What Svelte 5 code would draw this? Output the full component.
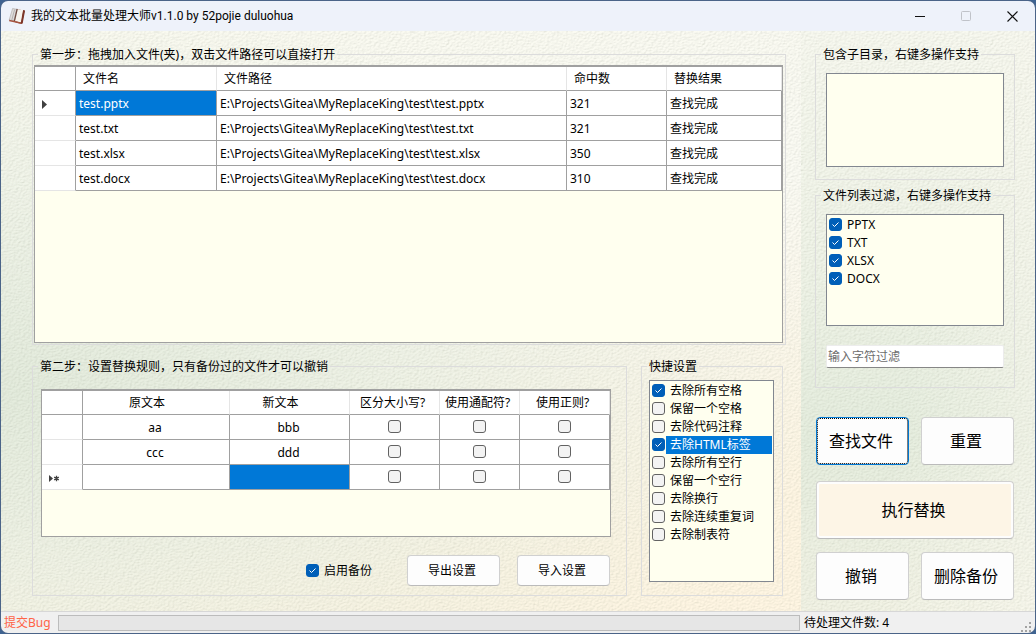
<script>
  const files = [
    { name: 'test.pptx', hits: 321, result: '查找完成' },
    { name: 'test.txt', hits: 321, result: '查找完成' },
    { name: 'test.xlsx', hits: 350, result: '查找完成' },
    { name: 'test.docx', hits: 310, result: '查找完成' }
  ];
  const root = 'E:\\Projects\\Gitea\\MyReplaceKing\\test\\';

  const rules = [
    { from: 'aa', to: 'bbb' },
    { from: 'ccc', to: 'ddd' },
    { from: '', to: '' }
  ];
  const flags = ['区分大小写?', '使用通配符?', '使用正则?'];

  let types = $state([
    { label: 'PPTX', on: true },
    { label: 'TXT', on: true },
    { label: 'XLSX', on: true },
    { label: 'DOCX', on: true }
  ]);

  let quick = $state([
    { label: '去除所有空格', on: true },
    { label: '保留一个空格', on: false },
    { label: '去除代码注释', on: false },
    { label: '去除HTML标签', on: true },
    { label: '去除所有空行', on: false },
    { label: '保留一个空行', on: false },
    { label: '去除换行', on: false },
    { label: '去除连续重复词', on: false },
    { label: '去除制表符', on: false }
  ]);
  let selected = $state(3);
  let backup = $state(true);
  let filter = $state('');
</script>

<div class="window">
  <header class="titlebar">
    <svg class="logo" width="18" height="18" viewBox="0 0 18 18" aria-hidden="true">
      <path d="M10 2 16.500 4 14 17 7.500 15.500z" fill="#8c4434" />
      <path d="M4.600 1.500 1.200 13l4.600.8L8.600 2.300z" fill="#dfdddc" stroke="#aaa6a4" stroke-width=".6" />
      <path d="M9.200 2 6.400 14l6.800 1.500L15.400 3z" fill="#f7f4ee" />
      <path d="M9.200 1.800 6.400 14.200" stroke="#6d4a41" stroke-width="1.300" />
      <path d="M6.600 2.600 3.800 13" stroke="#a9a6a4" stroke-width=".8" />
      <path d="M1.200 13.500 6 14.500l7.500 1.900" fill="none" stroke="#a5533f" stroke-width="1.300" />
      <path d="M16.100 3.200 13.700 16.400" fill="none" stroke="#7c3528" stroke-width="2" />
    </svg>
    <h1>我的文本批量处理大师v1.1.0 by 52pojie duluohua</h1>
    <div class="controls">
      <button aria-label="最小化"><svg width="11" height="11" viewBox="0 0 11 11"><path d="M0 5.500h10" stroke="#111" /></svg></button>
      <button aria-label="最大化" disabled><svg width="11" height="11" viewBox="0 0 11 11"><rect x=".5" y=".5" width="9" height="9" rx="1" fill="none" stroke="#c0c3c9" /></svg></button>
      <button aria-label="关闭"><svg width="11" height="11" viewBox="0 0 11 11"><path d="m.5.5 10 10m0-10-10 10" stroke="#111" stroke-width="1.100" /></svg></button>
    </div>
  </header>

  <div class="content">
    <main>
      <fieldset class="files">
        <legend>第一步：拖拽加入文件(夹)，双击文件路径可以直接打开</legend>
        <div class="grid">
          <table>
            <colgroup><col class="c-head" /><col class="c-name" /><col /><col class="c-hits" /><col class="c-result" /></colgroup>
            <thead>
              <tr><th></th><th>文件名</th><th>文件路径</th><th>命中数</th><th>替换结果</th></tr>
            </thead>
            <tbody>
              {#each files as file, i}
                <tr>
                  <th>
                    {#if i === 0}
                      <svg width="6" height="9" viewBox="0 0 6 9" aria-hidden="true"><path d="M1 0v9l5-4.500z" fill="#404040" /></svg>
                    {/if}
                  </th>
                  <td class:active={i === 0}>{file.name}</td>
                  <td>{root}{file.name}</td>
                  <td>{file.hits}</td>
                  <td>{file.result}</td>
                </tr>
              {/each}
            </tbody>
          </table>
        </div>
      </fieldset>

      <div class="lower">
        <fieldset class="rules">
          <legend>第二步：设置替换规则，只有备份过的文件才可以撤销</legend>
          <div class="grid centered">
            <table>
              <colgroup><col class="c-head" /><col /><col class="c-to" /><col class="c-case" /><col class="c-wild" /><col class="c-regex" /></colgroup>
              <thead>
                <tr><th></th><th>原文本</th><th>新文本</th>{#each flags as flag}<th>{flag}</th>{/each}</tr>
              </thead>
              <tbody>
                {#each rules as rule, i}
                  <tr>
                    <th>
                      {#if i === 2}
                        <svg width="12" height="7" viewBox="0 0 12 7" aria-hidden="true"><path d="M1 0v7l4-3.500z" fill="#404040" /><path d="M8.500.800v5.400M6.200 2.100l4.600 2.800M10.800 2.100 6.200 4.900" stroke="#404040" stroke-width="1.300" /></svg>
                      {/if}
                    </th>
                    <td>{rule.from}</td>
                    <td class:active={i === 2}>{rule.to}</td>
                    {#each flags as flag}
                      <td><input type="checkbox" aria-label={flag} /></td>
                    {/each}
                  </tr>
                {/each}
              </tbody>
            </table>
          </div>
          <div class="actions">
            <label><input type="checkbox" bind:checked={backup} />启用备份</label>
            <button class="btn">导出设置</button>
            <button class="btn">导入设置</button>
          </div>
        </fieldset>

        <fieldset class="quick">
          <legend>快捷设置</legend>
          <div class="listbox">
            {#each quick as item, i}
              <label class:selected={i === selected}>
                <input type="checkbox" bind:checked={item.on} onchange={() => (selected = i)} />
                <span>{item.label}</span>
              </label>
            {/each}
          </div>
        </fieldset>
      </div>
    </main>

    <aside>
      <fieldset class="folders">
        <legend>包含子目录，右键多操作支持</legend>
        <div class="listbox"></div>
      </fieldset>

      <fieldset class="filters">
        <legend>文件列表过滤，右键多操作支持</legend>
        <div class="listbox">
          {#each types as type}
            <label><input type="checkbox" bind:checked={type.on} /><span>{type.label}</span></label>
          {/each}
        </div>
        <input class="search" type="text" placeholder="输入字符过滤" aria-label="输入字符过滤" bind:value={filter} />
      </fieldset>

      <div class="commands">
        <button class="btn focused">查找文件</button>
        <button class="btn">重置</button>
        <button class="btn run">执行替换</button>
        <button class="btn">撤销</button>
        <button class="btn">删除备份</button>
      </div>
    </aside>
  </div>

  <footer>
    <a href="#bug">提交Bug</a>
    <div class="progress" role="progressbar" aria-label="进度" aria-valuenow="0"></div>
    <p>待处理文件数: 4</p>
    <svg width="11" height="11" viewBox="0 0 11 11" fill="#a3a3a3" aria-hidden="true">
      <path d="M8 0h2v2H8zM4 4h2v2H4zM8 4h2v2H8zM0 8h2v2H0zM4 8h2v2H4zM8 8h2v2H8z" />
    </svg>
  </footer>
</div>

<style>
  :global(body) {
    margin: 0;
    background: #3f6391;
  }

  .window {
    --paper: url("data:image/svg+xml,%3Csvg xmlns='http://www.w3.org/2000/svg' width='256' height='256'%3E%3Cfilter id='p' x='0' y='0' width='1' height='1' color-interpolation-filters='sRGB'%3E%3CfeTurbulence type='fractalNoise' baseFrequency='.42 .75' numOctaves='2' seed='7' stitchTiles='stitch'/%3E%3CfeDiffuseLighting surfaceScale='.8' lighting-color='white'%3E%3CfeDistantLight azimuth='235' elevation='55'/%3E%3C/feDiffuseLighting%3E%3CfeColorMatrix values='0 0 0 0 .35 0 0 0 0 .38 0 0 0 0 .3 -.45 0 0 0 .4'/%3E%3C/filter%3E%3Crect width='256' height='256' filter='url(%23p)'/%3E%3C/svg%3E");
    box-sizing: border-box;
    display: flex;
    flex-direction: column;
    min-height: 100vh;
    border: 1px solid #4b6488;
    border-radius: 8px;
    overflow: hidden;
    color: #000;
    font: 12px/16px 'Noto Sans', 'Noto Sans CJK SC', sans-serif;
  }

  .titlebar {
    display: flex;
    align-items: center;
    height: 30px;
    padding-left: 7px;
    background: #eef2fa;
  }

  h1 {
    flex: 1;
    margin: 0 0 0 5px;
    font: 400 12px/16px Roboto, 'Noto Sans CJK SC', sans-serif;
  }

  .controls {
    display: flex;
  }

  .controls button {
    display: grid;
    place-items: center;
    width: 46px;
    height: 30px;
    padding: 0;
    border: 0;
    background: none;
  }

  .content {
    display: flex;
    flex: 1;
  }

  main {
    display: flex;
    flex: 1;
    flex-direction: column;
    gap: 13px;
    min-width: 0;
    padding: 15px 15px 15px 31px;
    background:
      var(--paper),
      radial-gradient(ellipse at 0 62%, #e4ecdd 0, #eaf0e3b0 35%, #ecf1e400 75%),
      linear-gradient(165deg, #fafaf0 0, #fbfbf4 45%, #fff6e3 85%);
  }

  aside {
    display: flex;
    flex-direction: column;
    width: 200px;
    padding: 15px 20px 11px 14px;
    background:
      var(--paper),
      linear-gradient(100deg, #e6eedf00 50%, #faf9efb0 100%),
      linear-gradient(180deg, #f8f9f0 0, #f0f4e8 40%, #e6eedf 70%, #f2f3e5 100%);
  }

  fieldset {
    display: flex;
    flex-direction: column;
    min-width: 0;
    margin: 0;
    padding: 0;
    border: 1px solid #dcdcdc;
  }

  legend {
    margin-left: 5px;
    padding: 1px 2px 0;
    line-height: 16px;
  }

  .files {
    flex: 1;
  }

  .files .grid {
    flex: 1;
    margin: 2px 2px 1px 1px;
  }

  .lower {
    display: flex;
    gap: 14px;
    margin-right: 3px;
  }

  .rules {
    flex: 1;
  }

  .rules .grid {
    min-height: 145px;
    margin: 14px 15px 0 8px;
  }

  .grid {
    border: 1px solid #a0a0a0;
    border-top-width: 2px;
    background: #ffffef;
  }

  table {
    width: 100%;
    border-collapse: separate;
    border-spacing: 0;
    table-layout: fixed;
    background: #fff;
  }

  .c-head { width: 41px; }
  .c-name { width: 141px; }
  .c-hits { width: 100px; }
  .c-result { width: 115px; }
  .c-to { width: 120px; }
  .c-case, .c-regex { width: 90px; }
  .c-wild { width: 80px; }

  th, td {
    box-sizing: border-box;
    height: 25px;
    padding: 2px 3px 0;
    border-right: 1px solid #a0a0a0;
    border-bottom: 1px solid #a0a0a0;
    font-weight: 400;
    line-height: 16px;
    text-align: left;
    white-space: nowrap;
  }

  thead th {
    height: 24px;
    padding: 0 7px;
    border-right-color: #e5e5e5;
  }

  thead th:first-child {
    border-right-color: #a0a0a0;
  }

  tbody th {
    padding: 2px 6px 0;
    border-bottom-color: #e5e5e5;
  }

  th svg, td input {
    display: block;
  }

  .centered td {
    padding-right: 5px;
    text-align: center;
  }

  .centered td:nth-child(n + 4) {
    padding-right: 3px;
  }

  .centered thead th {
    padding: 0 20px 0 2px;
    text-align: center;
  }

  .centered thead th:nth-child(n + 4) {
    padding: 0 4px 0 0;
  }

  .centered td input {
    margin: 0 auto 4px;
  }

  .active {
    background: #0078d7;
    color: #fff;
  }

  input[type='checkbox'] {
    flex: none;
    box-sizing: border-box;
    width: 13px;
    height: 13px;
    border: 1px solid #626262;
    border-radius: 3px;
    background: #f3f3f3;
    appearance: none;
  }

  input[type='checkbox']:checked {
    border-color: #005fb8;
    background: #005fb8 url("data:image/svg+xml,%3Csvg xmlns='http://www.w3.org/2000/svg' viewBox='0 0 11 11'%3E%3Cpath d='m2.500 5.500 2 2 4-4' fill='none' stroke='white'/%3E%3C/svg%3E") center / 11px 11px no-repeat;
  }

  .actions {
    display: flex;
    align-items: center;
    justify-content: flex-end;
    gap: 17px;
    margin: 18px 16px 9px 8px;
  }

  .actions label {
    display: flex;
    align-items: center;
    margin-right: 18px;
  }

  .actions input {
    margin: 0 5px 0 0;
  }

  .btn {
    box-sizing: border-box;
    padding: 0 3px 0 0;
    border: 1px solid #d0d0d0;
    border-bottom-color: #bbb;
    border-radius: 4px;
    background: #fdfdfd;
    color: #000;
    font: inherit;
  }

  .actions .btn {
    width: 93px;
    height: 31px;
  }

  .quick {
    width: 140px;
  }

  .quick .listbox {
    flex: 1;
    margin: 5px 8px 13px 7px;
  }

  .listbox {
    box-sizing: border-box;
    padding: 1px;
    border: 1px solid #828790;
    background: #ffffef;
  }

  .listbox label {
    display: flex;
    height: 18px;
  }

  .listbox label input {
    margin: 2px 1px 0;
  }

  .listbox span {
    flex: 1;
    padding-left: 4px;
    line-height: 18px;
  }

  .selected span {
    background: #0078d7;
    color: #fff;
  }

  .folders .listbox {
    height: 94px;
    margin: 10px 10px 12px;
  }

  .filters {
    margin-top: 7px;
  }

  .filters .listbox {
    height: 112px;
    margin: 10px 10px 0;
  }

  .search {
    box-sizing: border-box;
    height: 23px;
    margin: 19px 10px;
    padding: 0 1px;
    border: 1px solid #ececec;
    border-bottom-color: #868686;
    border-radius: 2px;
    background: #fff;
    font: inherit;
  }

  .search::placeholder {
    color: #6d6d6d;
  }

  .commands {
    display: grid;
    grid-template-columns: 1fr 1fr;
    gap: 13px 12px;
    margin: 29px 1px 0;
  }

  .commands .btn {
    height: 48px;
    font-size: 16px;
  }

  .commands .focused {
    border: 1px solid #0078d4;
    outline: 1px dotted #000;
    outline-offset: -2px;
  }

  .commands .run {
    grid-column: span 2;
    height: 58px;
    margin-top: 3px;
    background: #fdf5e6;
    box-shadow: inset 0 0 0 2px #fdfdfd;
  }

  footer {
    display: flex;
    align-items: center;
    height: 21px;
    padding: 0 3px;
    border-top: 1px solid #d7d7d7;
    background: #f0f0f0;
  }

  a {
    width: 54px;
    color: #ff6347;
    text-decoration: none;
  }

  .progress {
    box-sizing: border-box;
    flex: 1;
    height: 16px;
    border: 1px solid #bcbcbc;
    background: #e6e6e6;
  }

  footer p {
    width: 217px;
    margin: 0 0 0 4px;
  }

  footer svg {
    align-self: flex-end;
  }
</style>
